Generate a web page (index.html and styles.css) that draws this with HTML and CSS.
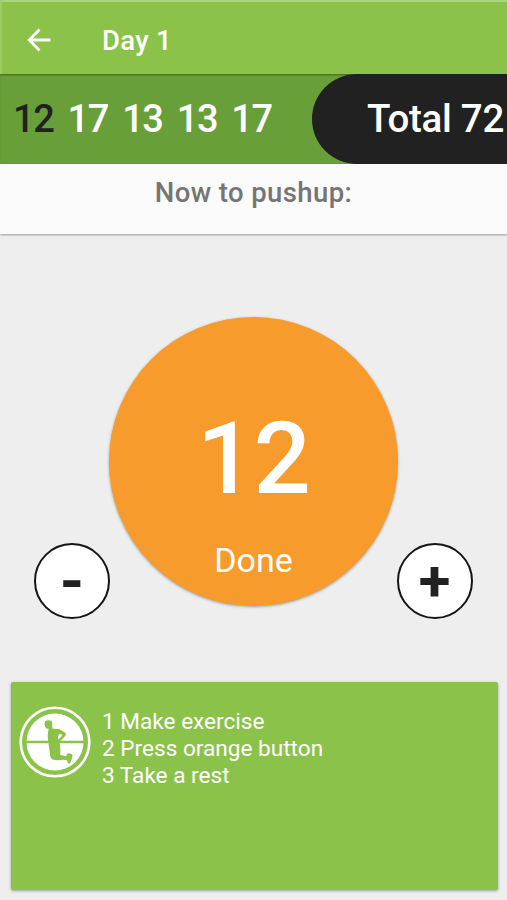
FILE: index.html
```html
<!DOCTYPE html>
<html lang="en">
<head>
<meta charset="utf-8">
<title>Day 1</title>
<link rel="stylesheet" href="styles.css">
</head>
<body>
<header class="bar">
  <svg class="back" viewBox="0 0 24 24" width="24" height="24"><path d="M23.500 12H2.500M12.500 1.600L2.300 12L12.500 22.400" fill="none" stroke="#fff" stroke-width="2.800"/></svg>
  <h1 class="title"><span>Day 1</span></h1>
</header>
<section class="sets">
  <div class="reps"><span class="current">12</span> <span>17</span> <span>13</span> <span>13</span> <span>17</span></div>
  <div class="total"><span>Total 72</span></div>
</section>
<section class="prompt"><span>Now to pushup:</span></section>
<main class="stage">
  <button class="round"><span class="minus">-</span></button>
  <button class="done"><span class="count">12</span><span class="label">Done</span></button>
  <button class="round"><span class="plus">+</span></button>
</main>
<section class="card">
  <svg class="emblem" viewBox="0 0 72 72" width="72" height="72">
    <circle cx="36" cy="36" r="34.300" fill="none" stroke="#fff" stroke-width="2.600"/>
    <circle cx="36" cy="36" r="28.500" fill="#fff"/>
    <path d="M7 36H65" stroke="#8bc34a" stroke-width="2.500"/>
    <path fill="#8bc34a" d="M26 15.500Q29 13.500 32.500 15Q34 17 33.200 20.500L33.500 22.500Q37 23 40 23Q43 24.500 46.500 27Q47.300 28.200 46.500 29.500Q44 32.500 42 34.500L40.500 35.500Q41.300 39 41.200 42.500Q41.500 46 41.200 49Q44 49.500 46.500 50.200Q48 49.500 48 47.800L50.500 47.200L53.500 48.500Q53.500 52 51 57.500L49 57.500L48 54.200Q44 53.500 42 54Q37 54.500 33.500 53.500Q31.300 52 31 49Q30.800 45 30 41Q29 35 28.700 30Q28.500 26 29.800 23Q27 23 26 20.500Q25 18 26 15.500Z"/>
    <path fill="#fff" d="M40 28L43.500 28.800Q42 31.500 39.300 33.500Q38.500 30.500 40 28Z"/>
  </svg>
  <ol class="steps"><li>1 Make exercise</li><li>2 Press orange button</li><li>3 Take a rest</li></ol>
</section>
</body>
</html>
```

FILE: styles.css
```css
* { box-sizing: border-box; }
body {
  margin: 0;
  height: 900px;
  display: flex;
  flex-direction: column;
  overflow: hidden;
  background: #eeeeee;
  color: #fff;
  font-family: Roboto, sans-serif;
}
button { font: inherit; color: inherit; padding: 0; border: 0; }

.bar {
  flex: none;
  height: 74px;
  display: flex;
  align-items: center;
  gap: 51px;
  padding: 4px 0 0 27px;
  background: #8bc34a;
  border-top: 2px solid #a9d47a;
  border-left: 2px solid #9bcc63;
}
.back { margin-left: -2px; }
.title { margin: 1px 0 0; font-size: 27.5px; font-weight: 500; line-height: 32px; letter-spacing: .3px; }

.sets {
  flex: none;
  height: 90px;
  display: flex;
  justify-content: space-between;
  background: #689f38;
  box-shadow: inset 0 2px 2px -1px rgba(0, 0, 0, .35);
  font-size: 38.5px;
  font-weight: 500;
  line-height: 90px;
  white-space: nowrap;
}
.reps { padding-left: 13px; font-size: 38px; letter-spacing: -1.4px; word-spacing: 6.1px; }
.current { color: #212121; }
.total {
  width: 195px;
  padding-left: 55px;
  background: #212121;
  border-radius: 45px 0 0 45px;
  letter-spacing: -.3px;
}

.prompt {
  flex: none;
  height: 70px;
  background: #fafafa;
  box-shadow: 0 1px 2px rgba(0, 0, 0, .35);
  color: #757575;
  font-size: 27.5px;
  font-weight: 500;
  line-height: 57px;
  letter-spacing: .4px;
  text-align: center;
}

.stage {
  flex: none;
  height: 448px;
  display: flex;
  justify-content: center;
  align-items: flex-start;
  padding-top: 83px;
}
.round {
  width: 76px;
  height: 76px;
  margin-top: 226px;
  display: flex;
  align-items: center;
  justify-content: center;
  background: #fff;
  border: 2px solid #151515;
  border-radius: 50%;
  color: #212121;
  font-weight: 700;
  font-size: 58px;
  line-height: 76px;
}
.plus { margin-left: -1px; }
.minus { font-size: 62px; }
.done {
  width: 289px;
  height: 289px;
  margin: 0 -1px;
  display: flex;
  flex-direction: column;
  align-items: center;
  background: #f79b2c;
  border-radius: 50%;
  box-shadow: 0 1px 3px rgba(0, 0, 0, .35);
}
.count { margin-top: 82px; font-size: 101px; font-weight: 500; line-height: 120px; letter-spacing: -1px; }
.label { margin-top: 21px; font-size: 34px; line-height: 40px; }

.card {
  flex: none;
  height: 208px;
  margin: 0 9px 0 11px;
  display: flex;
  align-items: flex-start;
  gap: 11px;
  padding: 24px 0 0 8px;
  background: #8bc34a;
  border-radius: 2px;
  box-shadow: 0 1px 3px rgba(0, 0, 0, .35);
}
.steps {
  margin: 0;
  padding: 2px 0 0;
  list-style: none;
  font-size: 22.6px;
  line-height: 27px;
}
```
